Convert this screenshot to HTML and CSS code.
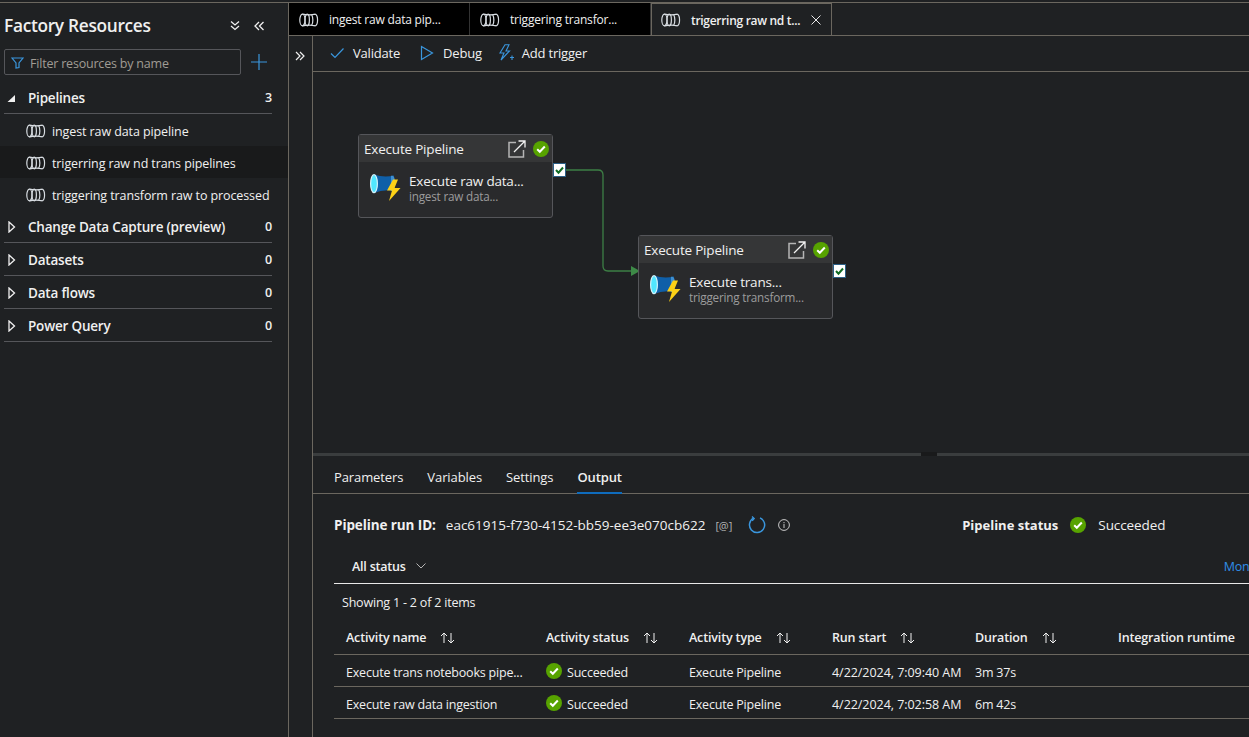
FILE: index.html
```html
<!DOCTYPE html>
<html lang="en">
<head>
  <meta charset="UTF-8" />
  <title>Factory Resources</title>
  <link rel="stylesheet" href="styles.css">
</head>
<body>
  <svg class="defs" width="0" height="0">
    <symbol id="pipe" viewBox="0 0 20 14">
      <g fill="none" stroke="currentColor" stroke-width="1.2">
        <ellipse cx="3.4" cy="7" rx="2.6" ry="5.8"/>
        <ellipse cx="8.200" cy="7" rx="2.200" ry="5.800"/>
        <path d="M3.4 1.2Q10 2.400 16.600 1.200M3.4 12.800Q10 11.600 16.600 12.800M12.800 2C14.200 4.500 14.200 9.500 12.800 12M16.600 1.200C19.200 3 19.200 11 16.600 12.800"/>
      </g>
    </symbol>
    <symbol id="ok" viewBox="0 0 16 16">
      <circle cx="8" cy="8" r="8" fill="#57a300"/>
      <path d="M4.2 8.3l2.6 2.5 5-5.3" fill="none" stroke="#fff" stroke-width="2"/>
    </symbol>
    <symbol id="sort" viewBox="0 0 15 12">
      <path d="M4 11V1.2M1 4l3-3 3 3M11 1v9.8M8 8l3 3 3-3" fill="none" stroke="#f2f2f2" stroke-width="1"/>
    </symbol>
    <symbol id="open" viewBox="0 0 18 18">
      <path d="M8 2.5H1V17h14.500V10" fill="none" stroke="#b5b5b5" stroke-width="1.500"/>
      <path d="M6 12L17 1M10.500 1H17V7.500" fill="none" stroke="#f2f2f2" stroke-width="1.300"/>
    </symbol>
    <symbol id="activity" viewBox="0 0 32 30">
      <path d="M5 1.500Q15 5 25 2.500V18Q15 16 5 20z" fill="#0f5fa8"/>
      <path d="M22 2.800c2.500-.5 4 1 4 7.500s-1.500 8-4 7.700z" fill="#3f8fd0"/>
      <ellipse cx="5" cy="10.700" rx="3.400" ry="9" fill="#50e6ff" stroke="#d5f2fb" stroke-width="1.200"/>
      <path d="M24 6.500l-6 11h5L20 28l11.500-13h-6L29 6.500z" fill="#fcd116"/>
    </symbol>
    <symbol id="check" viewBox="0 0 13 14">
      <rect x=".5" y=".5" width="12" height="13" fill="#fff" stroke="#2b5f86"/>
      <path d="M3 7l2.500 2.700L10 4.500" fill="none" stroke="#0f6b23" stroke-width="2"/>
    </symbol>
  </svg>

  <div class="app">
    <aside class="sidebar">
      <div class="side-head">
        <h1>Factory Resources</h1>
        <svg class="head-icon" width="12" height="12" viewBox="0 0 12 12"><path d="M2 1.500l4 3.500 4-3.500M2 6l4 3.500L10 6" fill="none" stroke="#f0f0f0" stroke-width="1.300"/></svg>
        <svg class="head-icon" width="12" height="12" viewBox="0 0 12 12"><path d="M6 2L2 6l4 4M10.500 2l-4 4 4 4" fill="none" stroke="#f0f0f0" stroke-width="1.300"/></svg>
      </div>
      <div class="filter-row">
        <div class="filter">
          <svg width="13" height="12" viewBox="0 0 13 12"><path d="M1 1h11L8 6v4.500L5 11V6z" fill="none" stroke="#3a96dd" stroke-width="1.200"/></svg>
          <span>Filter resources by name</span>
        </div>
        <svg class="plus" width="16" height="16" viewBox="0 0 16 16"><path d="M8 0v16M0 8h16" stroke="#3a96dd" stroke-width="1.200"/></svg>
      </div>

      <div class="section open">
        <svg class="caret" width="12" height="12" viewBox="0 0 12 12"><path d="M11 3v7H3.500z" fill="#f0f0f0"/></svg>
        <span class="sec-name">Pipelines</span><span class="count">3</span>
      </div>
      <div class="res"><svg class="pipe"><use href="#pipe"/></svg>ingest raw data pipeline</div>
      <div class="res active"><svg class="pipe"><use href="#pipe"/></svg>trigerring raw nd trans pipelines</div>
      <div class="res"><svg class="pipe"><use href="#pipe"/></svg>triggering transform raw to processed</div>

      <div class="section">
        <svg class="caret" width="12" height="12" viewBox="0 0 12 12"><path d="M5 1L10.500 6 5 11z" fill="none" stroke="#f0f0f0" stroke-width="1.300"/></svg>
        <span class="sec-name">Change Data Capture (preview)</span><span class="count">0</span>
      </div>
      <div class="section">
        <svg class="caret" width="12" height="12" viewBox="0 0 12 12"><path d="M5 1L10.500 6 5 11z" fill="none" stroke="#f0f0f0" stroke-width="1.300"/></svg>
        <span class="sec-name">Datasets</span><span class="count">0</span>
      </div>
      <div class="section">
        <svg class="caret" width="12" height="12" viewBox="0 0 12 12"><path d="M5 1L10.500 6 5 11z" fill="none" stroke="#f0f0f0" stroke-width="1.300"/></svg>
        <span class="sec-name">Data flows</span><span class="count">0</span>
      </div>
      <div class="section">
        <svg class="caret" width="12" height="12" viewBox="0 0 12 12"><path d="M5 1L10.500 6 5 11z" fill="none" stroke="#f0f0f0" stroke-width="1.300"/></svg>
        <span class="sec-name">Power Query</span><span class="count">0</span>
      </div>
    </aside>

    <main class="main">
      <div class="tabs">
        <div class="tab"><svg class="pipe"><use href="#pipe"/></svg><span>ingest raw data pip...</span></div>
        <div class="tab"><svg class="pipe"><use href="#pipe"/></svg><span>triggering transfor...</span></div>
        <div class="tab current"><svg class="pipe"><use href="#pipe"/></svg><span>trigerring raw nd t...</span>
          <svg class="close" width="10" height="10" viewBox="0 0 10 10"><path d="M.5.500l9 9M9.500.500l-9 9" stroke="#e8e8e8" stroke-width="1"/></svg>
        </div>
      </div>

      <div class="editor">
        <div class="strip">
          <svg width="10" height="10" viewBox="0 0 10 10"><path d="M1 1l4 4-4 4M5 1l4 4-4 4" fill="none" stroke="#f0f0f0" stroke-width="1.200"/></svg>
        </div>
        <div class="work">
          <div class="toolbar">
            <div class="tool">
              <svg width="14" height="12" viewBox="0 0 14 12"><path d="M1 6.500L5 10.500 13.500 1.500" fill="none" stroke="#3a96dd" stroke-width="1.200"/></svg>
              Validate
            </div>
            <div class="tool">
              <svg width="14" height="16" viewBox="0 0 14 16"><path d="M1.500 1.500L12.500 8 1.500 14.500z" fill="none" stroke="#3a96dd" stroke-width="1.200"/></svg>
              Debug
            </div>
            <div class="tool last">
              <svg width="15" height="17" viewBox="0 0 15 17"><path d="M6 .7L1 9h4l-3 7 8.500-9H7l3-6.300zM11 13.500h4M13 11.500v4.500" fill="none" stroke="#3a96dd" stroke-width="1.100"/></svg>
              Add trigger
            </div>
          </div>

          <div class="canvas">
            <svg class="wire" width="80" height="110" viewBox="0 0 80 110">
              <path d="M0 1H32Q37 1 37 6V97Q37 102 42 102H66" fill="none" stroke="#3d7f45" stroke-width="1.300"/>
              <path d="M65 97l9 5-9 5z" fill="#3d8a47"/>
            </svg>

            <div class="node node-a">
              <div class="node-head">
                <span>Execute Pipeline</span>
                <svg class="node-open"><use href="#open"/></svg>
                <svg class="node-ok"><use href="#ok"/></svg>
              </div>
              <div class="node-body">
                <svg class="node-icon"><use href="#activity"/></svg>
                <div>
                  <div class="node-title">Execute raw data...</div>
                  <div class="node-sub">ingest raw data...</div>
                </div>
              </div>
              <svg class="node-check"><use href="#check"/></svg>
            </div>

            <div class="node node-b">
              <div class="node-head">
                <span>Execute Pipeline</span>
                <svg class="node-open"><use href="#open"/></svg>
                <svg class="node-ok"><use href="#ok"/></svg>
              </div>
              <div class="node-body">
                <svg class="node-icon"><use href="#activity"/></svg>
                <div>
                  <div class="node-title">Execute trans...</div>
                  <div class="node-sub">triggering transform...</div>
                </div>
              </div>
              <svg class="node-check"><use href="#check"/></svg>
            </div>

            <div class="handle"></div>
          </div>

          <section class="panel">
            <div class="panel-tabs">
              <div>Parameters</div>
              <div>Variables</div>
              <div>Settings</div>
              <div class="selected">Output</div>
            </div>

            <div class="run-row">
              <strong>Pipeline run ID:</strong>
              <span class="run-id">eac61915-f730-4152-bb59-ee3e070cb622</span>
              <span class="copy">[@]</span>
              <svg class="refresh" width="18" height="18" viewBox="0 0 18 18"><path d="M5.500 2.200A7.600 7.600 0 1 0 12 1.900" fill="none" stroke="#3a96dd" stroke-width="1.500"/><path d="M4 .5l2.200 2-2 2.400" fill="none" stroke="#3a96dd" stroke-width="1.300"/></svg>
              <svg class="info" width="12" height="12" viewBox="0 0 12 12"><circle cx="6" cy="6" r="5.400" fill="none" stroke="#c8c8c8"/><path d="M6 5v4M6 3v1.200" stroke="#c8c8c8"/></svg>
              <strong class="status-label">Pipeline status</strong>
              <svg class="ok-big"><use href="#ok"/></svg>
              <span>Succeeded</span>
            </div>

            <div class="filter-bar">
              <span class="all-status">All status</span>
              <svg width="10" height="6" viewBox="0 0 10 6"><path d="M.5.500L5 5 9.500.500" fill="none" stroke="#b5b5b5"/></svg>
              <a class="monitor">Monitor</a>
            </div>

            <div class="showing">Showing 1 - 2 of 2 items</div>

            <div class="row head-row">
              <div class="cell">Activity name<svg class="sort"><use href="#sort"/></svg></div>
              <div class="cell">Activity status<svg class="sort"><use href="#sort"/></svg></div>
              <div class="cell">Activity type<svg class="sort"><use href="#sort"/></svg></div>
              <div class="cell">Run start<svg class="sort"><use href="#sort"/></svg></div>
              <div class="cell">Duration<svg class="sort"><use href="#sort"/></svg></div>
              <div class="cell">Integration runtime</div>
            </div>
            <div class="row">
              <div class="cell">Execute trans notebooks pipe...</div>
              <div class="cell"><svg class="ok-small"><use href="#ok"/></svg>Succeeded</div>
              <div class="cell">Execute Pipeline</div>
              <div class="cell date">4/22/2024, 7:09:40 AM</div>
              <div class="cell">3m 37s</div>
              <div class="cell"></div>
            </div>
            <div class="row">
              <div class="cell">Execute raw data ingestion</div>
              <div class="cell"><svg class="ok-small"><use href="#ok"/></svg>Succeeded</div>
              <div class="cell">Execute Pipeline</div>
              <div class="cell date">4/22/2024, 7:02:58 AM</div>
              <div class="cell">6m 42s</div>
              <div class="cell"></div>
            </div>
          </section>
        </div>
      </div>
    </main>
  </div>
</body>
</html>
```

FILE: styles.css
```css
:root {
  --bg: #1f2123;
  --line: #6b675f;
  --soft-line: #55565a;
  --text: #f0f0f0;
  --blue: #3a96dd;
}

* {
  box-sizing: border-box;
}

html, body {
  height: 100%;
}

body {
  margin: 0;
  overflow: hidden;
  background: var(--bg);
  color: var(--text);
  font-family: 'Open Sans', 'Noto Sans', sans-serif;
  font-size: 12.500px;
  letter-spacing: -0.2px;
}

.defs {
  position: absolute;
}

.app {
  display: flex;
  height: 100vh;
  margin-top: 2px;
  border-top: 1px solid var(--line);
}

/* left column */
.sidebar {
  flex: 0 0 289px;
  border-right: 1px solid var(--line);
}

.side-head {
  display: flex;
  align-items: center;
  height: 42px;
  padding: 3px 0 0 4px;
}

.side-head h1 {
  flex: 1;
  margin: 0;
  font-size: 17.300px;
  font-weight: 600;
  letter-spacing: -0.3px;
}

.head-icon {
  margin-right: 12px;
}

.side-head .head-icon:last-child {
  margin-right: 23px;
}

.filter-row {
  display: flex;
  align-items: center;
  height: 26px;
  margin-top: 4px;
  padding-left: 4px;
}

.filter {
  display: flex;
  align-items: center;
  gap: 6px;
  width: 237px;
  height: 26px;
  padding: 2px 0 0 6px;
  border: 1px solid var(--soft-line);
  border-radius: 2px;
  color: #a09c94;
}

.plus {
  margin-left: 10px;
}

.section {
  display: flex;
  align-items: center;
  height: 33px;
  margin: 0 16px 0 4px;
  padding-top: 1px;
  border-bottom: 1px solid var(--soft-line);
  font-size: 13.500px;
  font-weight: 600;
}

.section.open {
  margin-top: 6px;
}

.caret {
  margin-right: 12px;
  flex: none;
}

.sec-name {
  flex: 1;
}

.count {
  font-size: 12.500px;
}

.res {
  display: flex;
  align-items: center;
  height: 32px;
  padding: 2px 0 0 26px;
  white-space: nowrap;
  letter-spacing: -0.1px;
}

.res.active {
  background: #191a1b;
}

.pipe {
  flex: none;
  width: 20px;
  height: 14px;
  margin-right: 6px;
  color: #d8dde2;
}

/* right column */
.main {
  flex: 1;
  min-width: 0;
  display: flex;
  flex-direction: column;
}

.tabs {
  display: flex;
  flex: 0 0 32px;
  border-bottom: 1px solid var(--line);
}

.tab {
  display: flex;
  align-items: center;
  flex: 0 0 181px;
  height: 32px;
  padding: 1px 0 0 10px;
  background: #000;
  border-right: 1px solid #333;
  font-size: 12px;
  white-space: nowrap;
}

.tab .pipe {
  margin-right: 10px;
}

.tab.current {
  padding-left: 9px;
  background: var(--bg);
  border: 1px solid var(--line);
  border-bottom: none;
  font-weight: 600;
  letter-spacing: -0.3px;
}

.close {
  margin-left: 11px;
}

.editor {
  flex: 1;
  display: flex;
  min-height: 0;
}

.strip {
  flex: 0 0 24px;
  padding: 12px 0 0 6px;
  border-right: 1px solid var(--line);
}

.work {
  flex: 1;
  min-width: 0;
  display: flex;
  flex-direction: column;
}

.toolbar {
  display: flex;
  align-items: center;
  gap: 20px;
  flex: 0 0 36px;
  padding: 0 0 2px 17px;
  border-bottom: 1px solid var(--line);
  font-size: 13px;
}

.tool {
  display: flex;
  align-items: center;
  gap: 9px;
}

.tool.last {
  gap: 8px;
  margin-left: -3px;
}

.canvas {
  position: relative;
  flex: 0 0 384px;
  border-bottom: 3px solid #3a3d3e;
}

.handle {
  position: absolute;
  left: 608px;
  bottom: -3px;
  width: 16px;
  height: 4px;
  background: #191a1b;
}

.wire {
  position: absolute;
  left: 253px;
  top: 97px;
}

.node {
  position: absolute;
  width: 195px;
  height: 84px;
  background: #292a2c;
  border: 1px solid #55565a;
  border-radius: 3px;
}

.node-a {
  left: 45px;
  top: 62px;
}

.node-b {
  left: 325px;
  top: 163px;
}

.node-head {
  display: flex;
  align-items: center;
  height: 27px;
  padding: 0 3px 0 5px;
  background: #353637;
  font-size: 13.500px;
}

.node-head span {
  flex: 1;
}

.node-open {
  width: 18px;
  height: 18px;
  margin-right: 7px;
}

.node-ok {
  width: 16px;
  height: 16px;
}

.node-body {
  display: flex;
  align-items: center;
  gap: 8px;
  padding: 11px 0 0 10px;
}

.node-icon {
  width: 32px;
  height: 30px;
  flex: none;
}

.node-title {
  font-size: 13.500px;
  line-height: 16px;
}

.node-sub {
  color: #9c9c9c;
  font-size: 11.700px;
  line-height: 14px;
}

.node-check {
  position: absolute;
  left: 194px;
  top: 28px;
  width: 13px;
  height: 14px;
}

/* bottom panel */
.panel {
  flex: 1;
  min-height: 0;
  overflow: hidden;
  font-size: 13px;
}

.panel-tabs {
  display: flex;
  gap: 24px;
  height: 38px;
  padding-left: 21px;
  border-bottom: 1px solid var(--line);
  letter-spacing: -0.1px;
}

.panel-tabs div {
  padding-top: 12px;
}

.panel-tabs .selected {
  font-weight: 600;
  border-bottom: 2px solid #0f6cbd;
  height: 38px;
}

.run-row {
  display: flex;
  align-items: center;
  height: 24px;
  margin-top: 19px;
  padding-left: 21px;
  font-size: 13.500px;
  letter-spacing: -0.1px;
}

.run-id {
  margin-left: 10px;
  letter-spacing: 0;
}

.copy {
  margin-left: 10px;
  font-size: 11px;
  color: #b5b5b5;
}

.refresh {
  margin-left: 16px;
}

.info {
  margin-left: 12px;
}

.status-label {
  margin-left: 172px;
  font-size: 13px;
  letter-spacing: 0;
}

.ok-big {
  width: 16px;
  height: 16px;
  margin: 0 12px;
}

.filter-bar {
  display: flex;
  align-items: center;
  gap: 10px;
  width: 935px;
  height: 37px;
  margin: 10px 0 0 21px;
  padding: 2px 0 0 18px;
  border-bottom: 1px solid #e8e8e8;
  font-size: 12.500px;
}

.all-status {
  font-weight: 600;
}

.monitor {
  margin-left: auto;
  color: #2f8fe8;
  white-space: nowrap;
}

.showing {
  height: 37px;
  padding: 10px 0 0 29px;
  font-size: 12.500px;
}

.row {
  display: grid;
  grid-template-columns: 200px 143px 143px 143px 143px 200px;
  height: 32px;
  width: 936px;
  margin-left: 21px;
  padding: 3px 0 0 12px;
  border-bottom: 1px solid var(--line);
  white-space: nowrap;
  font-size: 12.500px;
}

.head-row {
  height: 34px;
  padding-top: 0;
  font-weight: 600;
  letter-spacing: -0.15px;
}

.cell {
  display: flex;
  align-items: center;
}

.cell.date {
  letter-spacing: -0.05px;
}

.sort {
  width: 15px;
  height: 12px;
  margin-left: 14px;
}

.ok-small {
  width: 16px;
  height: 16px;
  margin: -2px 5px 0 0;
}
```
